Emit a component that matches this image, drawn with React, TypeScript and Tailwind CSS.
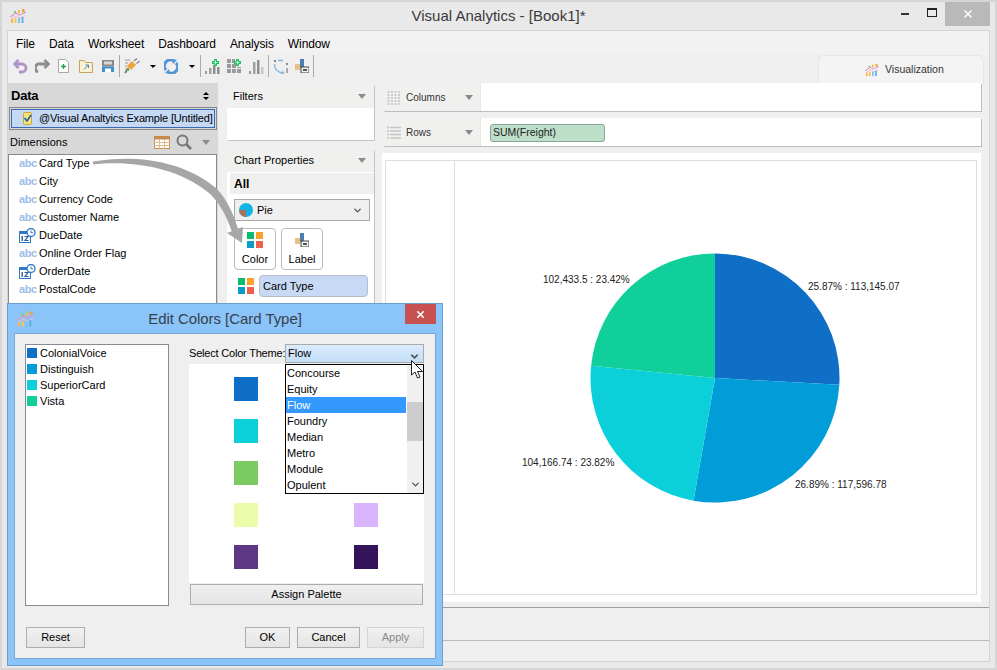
import { ChevronDown, X } from 'lucide-react';

const FONT = 'font-["Liberation_Sans",Arial,sans-serif]';

function Logo({ w = 16, h = 14 }: { w?: number; h?: number }) {
  return (
    <svg width={w} height={h} viewBox="0 0 16 14">
      <path d="M0 8 L6 4 L9 6 L16 3" fill="none" stroke="#d99ac4" strokeWidth="1.2" />
      <path d="M1 10 L6 7 L10 9 L15 7" fill="none" stroke="#e8b8d6" strokeWidth="1" />
      <rect x="1" y="10" width="2" height="4" fill="#f5b942" />
      <rect x="4.5" y="9" width="2" height="5" fill="#f5c35a" />
      <rect x="8" y="9" width="2" height="5" fill="#7cc4ee" />
      <rect x="11.5" y="8" width="2" height="6" fill="#5fb2e6" />
      <rect x="4" y="2" width="2" height="2" fill="#8cc46a" />
      <rect x="8" y="1" width="2" height="3" fill="#f5b942" />
      <rect x="12" y="0" width="2.5" height="3" fill="#f0a03c" />
    </svg>
  );
}

function Caret({ className = '' }: { className?: string }) {
  return <span className={`inline-block w-0 h-0 border-x-[4px] border-x-transparent border-t-[5px] border-t-[#8a8a8a] ${className}`} />;
}

function SmallCaret({ className = '' }: { className?: string }) {
  return <span className={`inline-block w-0 h-0 border-x-[3px] border-x-transparent border-t-[3px] border-t-black ${className}`} />;
}

function FourColors() {
  return (
    <div className="grid grid-cols-[7px_7px] gap-[2px]">
      <span className="w-[7px] h-[7px] bg-[#0cbc6e]" />
      <span className="w-[7px] h-[7px] bg-[#f8a22a]" />
      <span className="w-[7px] h-[7px] bg-[#0a9bc6]" />
      <span className="w-[7px] h-[7px] bg-[#ef5f4f]" />
    </div>
  );
}

function LabelGlyph() {
  return (
    <svg width="14" height="14" viewBox="0 0 14 14" className="shrink-0">
      <rect x="0" y="5" width="5" height="6" fill="#e5c184" />
      <rect x="5" y="0" width="4" height="9" fill="#4c7fb0" />
      <rect x="6" y="8" width="8" height="6" fill="#f2f2f2" stroke="#444" />
      <rect x="8" y="10" width="4" height="2" fill="#555" />
    </svg>
  );
}

function Abc() {
  return <span className="w-[20px] shrink-0 text-[11px] font-bold text-[#9bbdea] tracking-[-0.4px] leading-none">abc</span>;
}

function DateGlyph() {
  return (
    <svg width="17" height="15" viewBox="0 0 17 15">
      <rect x="0.5" y="3.5" width="11" height="11" fill="#fff" stroke="#2f79c9" />
      <rect x="0" y="3" width="12" height="3" fill="#2f79c9" />
      <rect x="2.5" y="8" width="1.4" height="5" fill="#2f5f9a" />
      <path d="M5.5 8.5 H9 L6 12.5 H9.5" fill="none" stroke="#2f5f9a" strokeWidth="1.2" />
      <circle cx="12" cy="4.5" r="4" fill="#fff" stroke="#2f79c9" strokeWidth="1.4" />
      <path d="M12 2.5 V4.8 H14" fill="none" stroke="#2f79c9" />
    </svg>
  );
}

function GreenPlus() {
  return (
    <>
      <path d="M10.5 0 V7 M7 3.5 H14" stroke="#17c45f" strokeWidth="3" />
      <path d="M10.5 1.5 V5.5 M8.5 3.5 H12.5" stroke="#c4f6d6" strokeWidth="1" />
    </>
  );
}

function Bars({ plus, dim, className = '' }: { plus?: boolean; dim?: boolean; className?: string }) {
  return (
    <svg width="15" height="15" viewBox="0 0 15 15" className={className}>
      <rect x="0" y="12" width="2" height="3" fill="#9a9a9a" />
      <rect x="4" y={dim ? 3 : 9} width="2.5" height={dim ? 12 : 6} fill="#a0a0a0" />
      <rect x="8" y={dim ? 1 : 6} width="2.5" height={dim ? 14 : 9} fill="#8f8f8f" />
      <rect x="12" y={8} width="2.5" height={7} fill={dim ? '#c8c8c8' : '#8f8f8f'} />
      {plus && <GreenPlus />}
    </svg>
  );
}

function GridPlus({ className = '' }: { className?: string }) {
  return (
    <svg width="14" height="14" viewBox="0 0 14 14" className={className}>
      <g fill="#9a9a9a">
        <rect x="0" y="0" width="4" height="4" /><rect x="5" y="0" width="3" height="4" />
        <rect x="0" y="5" width="4" height="4" /><rect x="5" y="5" width="4" height="4" /><rect x="10" y="8" width="4" height="1" />
        <rect x="0" y="10" width="4" height="4" /><rect x="5" y="10" width="4" height="4" /><rect x="10" y="10" width="4" height="4" />
      </g>
      <GreenPlus />
    </svg>
  );
}

function Sep({ className = '' }: { className?: string }) {
  return <span className={`w-px h-[22px] bg-[#a9a9a9] ${className}`} />;
}

function Pie() {
  const cx = 125;
  const cy = 125;
  const r = 124.5;
  const slices = [
    { v: 25.87, c: '#0f6fc6' },
    { v: 26.89, c: '#009dd9' },
    { v: 23.82, c: '#0bd0d9' },
    { v: 23.42, c: '#10cf9b' },
  ];
  let acc = 0;
  return (
    <svg width="250" height="250" viewBox="0 0 250 250">
      {slices.map(s => {
        const a0 = (acc / 100) * 2 * Math.PI;
        acc += s.v;
        const a1 = (acc / 100) * 2 * Math.PI;
        const d = `M${cx} ${cy} L${cx + r * Math.sin(a0)} ${cy - r * Math.cos(a0)} A${r} ${r} 0 0 1 ${cx + r * Math.sin(a1)} ${cy - r * Math.cos(a1)} Z`;
        return <path key={s.c} d={d} fill={s.c} />;
      })}
    </svg>
  );
}

function Btn({ children, className = '' }: { children: React.ReactNode; className?: string }) {
  return (
    <div className={`h-[21px] flex items-center justify-center border border-[#adadad] bg-gradient-to-b from-[#f0f0f0] to-[#e5e5e5] text-[11px] ${className}`}>
      {children}
    </div>
  );
}

const DIMENSIONS = [
  { name: 'Card Type', date: false },
  { name: 'City', date: false },
  { name: 'Currency Code', date: false },
  { name: 'Customer Name', date: false },
  { name: 'DueDate', date: true },
  { name: 'Online Order Flag', date: false },
  { name: 'OrderDate', date: true },
  { name: 'PostalCode', date: false },
  { name: 'ShipDate', date: false },
];

const THEMES = ['Concourse', 'Equity', 'Flow', 'Foundry', 'Median', 'Metro', 'Module', 'Opulent'];

const SWATCHES = ['#0f6fc6', '', '#0bd0d9', '', '#7cca62', '', '#ebfdaa', '#d9b5fe', '#5f3885', '#35135a'];

export default function App() {
  return (
    <div className={`${FONT} relative w-[997px] h-[670px] overflow-hidden bg-[#d6d6d6] p-[2px] text-[11px] text-black`}>
      <div className="h-full bg-[#e9e9e9] flex flex-col">
        {/* title bar */}
        <div className="h-[28px] shrink-0 flex items-center">
          <div className="ml-[8px] flex"><Logo /></div>
          <div className="flex-1 text-center text-[15px] text-[#3a3a3a] pl-[70px]">Visual Analytics - [Book1]*</div>
          <div className="flex items-start self-start mr-[5px]">
            <span className="mt-[11px] w-[8px] h-[2px] bg-[#333]" />
            <span className="mt-[6px] ml-[18px] w-[10px] h-[9px] border border-t-2 border-[#222]" />
            <div className="ml-[8px] w-[45px] h-[24px] bg-[#b9b9b9] flex items-center justify-center"><X size={12} strokeWidth={3} className="text-white" /></div>
          </div>
        </div>

        <div className="mx-[5px] h-[632px] border border-[#d4d4d4] flex flex-col bg-[#efefef]">
          {/* menu */}
          <div className="bg-[#f2f2f2] h-[23px] shrink-0 flex items-center gap-[14px] pl-[8px] pt-[3px] text-[12px] tracking-[-0.1px]">
            {['File', 'Data', 'Worksheet', 'Dashboard', 'Analysis', 'Window'].map(m => (
              <span key={m}>{m}</span>
            ))}
          </div>

          {/* toolbar */}
          <div className="h-[29px] shrink-0 flex items-start">
            <div className="flex items-center h-[22px] mt-px">
              <svg width="15" height="15" viewBox="0 0 15 15" className="ml-[5px]">
                <path d="M5.5 1 L1.5 5 L5.5 9" fill="none" stroke="#b093c8" strokeWidth="2.6" />
                <path d="M2 5 H9 A4 4 0 0 1 9 13 H6" fill="none" stroke="#b093c8" strokeWidth="2.8" />
              </svg>
              <svg width="15" height="14" viewBox="0 0 15 14" className="ml-[7px]">
                <path d="M9.5 1 L13.5 5 L9.5 9" fill="none" stroke="#8c8c8c" strokeWidth="2.6" />
                <path d="M13 5 H6 A4 4 0 0 0 3 13" fill="none" stroke="#8c8c8c" strokeWidth="3" />
              </svg>
              <svg width="11" height="14" viewBox="0 0 11 14" className="ml-[8px]">
                <path d="M0.5 0.5 H7.5 L10.5 3.5 V13.5 H0.5 Z" fill="#fff" stroke="#a8a8a8" />
                <path d="M5.5 5 V10 M3 7.5 H8" stroke="#1f9e4d" strokeWidth="1.3" />
              </svg>
              <svg width="14" height="13" viewBox="0 0 14 13" className="ml-[10px]">
                <path d="M0.5 0.5 H5 L6.5 2.5 H13.5 V12.5 H0.5 Z" fill="#fdf0d0" stroke="#c6a263" />
                <path d="M5 9.5 L9.5 5 M6.5 5 H9.5 V8" fill="none" stroke="#3d8fc9" />
              </svg>
              <svg width="12" height="12" viewBox="0 0 12 12" className="ml-[9px]">
                <rect x="0" y="0" width="12" height="6.5" fill="#8a8a8a" />
                <rect x="0" y="6.5" width="12" height="5.5" fill="#3f8fcc" />
                <rect x="2" y="1.5" width="8" height="3" fill="#d8d8d8" />
                <rect x="3" y="8.5" width="6" height="3.5" fill="#fff" />
              </svg>
              <Sep className="ml-[5px]" />
              <svg width="16" height="16" viewBox="0 0 16 16" className="ml-[4px]">
                <path d="M1 2 H6 M1 5 H4 M1 8 H3 M1 11 H3 M1 14 H3" stroke="#9a9a9a" strokeWidth="1.2" />
                <path d="M3 8 L8 3 L12 7 L7 12 Z" fill="#f0a33c" />
                <path d="M10 3 L13 0.5 M12.5 5.5 L15.5 3" stroke="#888" strokeWidth="1.4" />
                <path d="M4.5 10 L1 15" stroke="#777" strokeWidth="1.6" />
                <rect x="3" y="11" width="2" height="2" fill="#45b649" />
              </svg>
              <SmallCaret className="ml-[10px]" />
              <svg width="14" height="15" viewBox="0 0 14 15" className="ml-[8px]">
                <path d="M2 11 A6 6 0 0 1 9 1.5" fill="none" stroke="#4f94d4" strokeWidth="3" />
                <path d="M12 4 A6 6 0 0 1 5 13.5" fill="none" stroke="#4f94d4" strokeWidth="3" />
                <path d="M8 0 L13 1 L9 5 Z M6 15 L1 14 L5 10 Z" fill="#4f94d4" />
              </svg>
              <SmallCaret className="ml-[11px]" />
              <Sep className="ml-[5px]" />
              <Bars plus className="ml-[4px]" />
              <GridPlus className="ml-[7px]" />
              <Bars dim className="ml-[8px]" />
              <Sep className="ml-[4px]" />
              <svg width="15" height="15" viewBox="0 0 15 15" className="ml-[4px]">
                <rect x="1" y="1" width="2" height="2" fill="#888" />
                <rect x="13" y="4" width="2" height="2" fill="#888" />
                <rect x="13" y="9" width="2" height="5" fill="#aaa" />
                <path d="M5 1.5 H10 M1.5 5 C1.5 10 5 13.5 10 14" fill="none" stroke="#7db6e0" strokeWidth="1.3" />
                <path d="M9 11.5 L11 14 L8 15" fill="none" stroke="#7db6e0" />
              </svg>
              <span className="ml-[7px] flex"><LabelGlyph /></span>
              <Sep className="ml-[4px]" />
            </div>
            <div className="ml-auto mr-[5px] self-end w-[166px] h-[28px] bg-[#f4f4f4] border-t border-x border-[#e6e6e6] rounded-t-[6px] flex items-center pl-[46px] gap-[6px] text-[10.5px] text-[#333]">
              <Logo w={14} h={14} />
              <span>Visualization</span>
            </div>
          </div>

          {/* main area */}
          <div className="h-[524px] shrink-0 flex items-start">
            {/* data panel */}
            <div className="w-[210px] shrink-0 bg-[#d8d8d8] h-[240px] flex flex-col">
              <div className="h-[24px] shrink-0 flex items-center justify-between pl-[3px] pr-[9px] pt-px font-bold text-[13px] tracking-[-0.2px]">
                <span>Data</span>
                <span className="flex flex-col gap-[2px]">
                  <span className="w-0 h-0 border-x-[3px] border-x-transparent border-b-[3px] border-b-black" />
                  <span className="w-0 h-0 border-x-[3px] border-x-transparent border-t-[3px] border-t-black" />
                </span>
              </div>
              <div className="mx-px h-[23px] shrink-0 border border-[#888] p-px">
                <div className="h-full border border-[#3c68b5] bg-[#c5d9f5] flex items-center pl-[11px] whitespace-nowrap tracking-[-0.17px]">
                  <svg width="9" height="13" viewBox="0 0 9 13">
                    <rect x="0.5" y="0.5" width="8" height="12" rx="1" fill="#f5e27a" stroke="#c8a63a" />
                    <path d="M1.5 6 L4 9 L8 3" fill="none" stroke="#1c5fb5" strokeWidth="1.6" />
                  </svg>
                  <span className="ml-[7px]">@Visual Analtyics Example [Untitled]</span>
                </div>
              </div>
              <div className="h-[24px] shrink-0 flex items-center pl-[2px] pr-[8px]">
                <span>Dimensions</span>
                <svg width="16" height="13" viewBox="0 0 16 13" className="ml-auto">
                  <rect x="0.5" y="0.5" width="15" height="12" fill="#fff" stroke="#c58a4f" />
                  <rect x="0.5" y="0.5" width="15" height="3" fill="#c58a4f" />
                  <path d="M0 6.5 H16 M0 9.5 H16 M5.5 3 V13 M10.5 3 V13" stroke="#e0b88c" />
                </svg>
                <svg width="16" height="16" viewBox="0 0 16 16" className="ml-[6px]">
                  <circle cx="6.5" cy="6.5" r="5" fill="none" stroke="#777" strokeWidth="2" />
                  <path d="M10.5 10.5 L15 15" stroke="#777" strokeWidth="2.6" />
                </svg>
                <Caret className="ml-[10px]" />
              </div>
              <div className="flex-1 mr-px bg-white border border-[#8a8a8a] overflow-hidden">
                <div className="-mt-px">
                  {DIMENSIONS.map(d => (
                    <div key={d.name} className="h-[18px] flex items-center pl-[10px]">
                      {d.date ? <span className="w-[20px] flex"><DateGlyph /></span> : <Abc />}
                      <span>{d.name}</span>
                    </div>
                  ))}
                </div>
              </div>
            </div>

            {/* filters + chart properties */}
            <div className="w-[147px] shrink-0 ml-[9px]">
              <div className="bg-white shadow-[1px_1px_0_#c4c4c4] rounded-t-[4px] h-[57px]">
                <div className="h-[25px] bg-[#f0f0ee] rounded-t-[4px] flex items-center justify-between pl-[6px] pr-[8px] pt-[2px]">
                  <span>Filters</span>
                  <Caret />
                </div>
              </div>
              <div className="mt-[8px] bg-white shadow-[1px_1px_0_#c4c4c4] rounded-t-[4px] h-[180px]">
                <div className="h-[24px] bg-[#f0f0ee] rounded-t-[4px] flex items-center justify-between pl-[7px] pr-[8px] pt-px">
                  <span>Chart Properties</span>
                  <Caret />
                </div>
                <div className="h-[21px] mt-px ml-[3px] bg-[#efefef] flex items-center pl-[4px] font-bold text-[12px]">All</div>
                <div className="ml-[7px] w-[136px] mt-[5px] h-[22px] bg-[#efefef] border border-[#a8a8a8] flex items-center pl-[4px] pr-[6px]">
                  <svg width="14" height="14" viewBox="0 0 14 14">
                    <circle cx="7" cy="7" r="7" fill="#12b5e5" />
                    <path d="M7 7 V14 A7 7 0 0 1 0 7 Z" fill="#a5705f" />
                  </svg>
                  <span className="ml-[4px]">Pie</span>
                  <ChevronDown size={11} strokeWidth={3} className="ml-auto text-[#555]" />
                </div>
                <div className="flex gap-[5px] ml-[7px] mt-[7px]">
                  <div className="w-[42px] h-[42px] bg-white border border-[#bbb] rounded-[4px] flex flex-col items-center justify-between pt-[3px] pb-[2px]">
                    <FourColors />
                    <span>Color</span>
                  </div>
                  <div className="w-[42px] h-[42px] bg-white border border-[#bbb] rounded-[4px] flex flex-col items-center justify-between pt-[4px] pb-[2px]">
                    <LabelGlyph />
                    <span>Label</span>
                  </div>
                </div>
                <div className="flex items-center ml-[11px] mt-[5px] gap-[5px]">
                  <FourColors />
                  <div className="w-[109px] h-[22px] bg-[#c7d9f4] border border-[#b5bccb] rounded-[4px] flex items-center pl-[3px]">Card Type</div>
                </div>
              </div>
            </div>

            {/* shelves + canvas */}
            <div className="w-[599px] ml-[8px] shrink-0 flex flex-col">
              <div className="h-[28px] bg-white shadow-[1px_1px_0_#bdbdbd] flex rounded-l-[3px]">
                <div className="w-[99px] bg-[#f0f0ee] border-r border-[#e8e8dc] flex items-center pr-[7px] pt-px text-[10px] text-[#333]">
                  <svg width="14" height="14" viewBox="0 0 14 14" className="ml-[5px]">
                    <path d="M1.5 0 V14 M5 0 V14 M8.5 0 V14 M12 0 V14" stroke="#c4c4c4" strokeWidth="1.6" strokeDasharray="2 1" />
                  </svg>
                  <span className="ml-[5px]">Columns</span>
                  <Caret className="ml-auto" />
                </div>
              </div>
              <div className="mt-[7px] h-[28px] bg-white shadow-[1px_1px_0_#bdbdbd] flex rounded-l-[3px]">
                <div className="w-[99px] bg-[#f0f0ee] border-r border-[#e8e8dc] flex items-center pr-[7px] pt-px text-[10px] text-[#333]">
                  <svg width="14" height="14" viewBox="0 0 14 14" className="ml-[5px]">
                    <path d="M0 1.5 H14 M0 5 H14 M0 8.5 H14 M0 12 H14" stroke="#c4c4c4" strokeWidth="1.6" strokeDasharray="2 1 11 0" />
                  </svg>
                  <span className="ml-[5px]">Rows</span>
                  <Caret className="ml-auto" />
                </div>
                <div className="ml-[9px] mt-[6px] w-[115px] h-[18px] bg-[#bddfca] border border-[#86a895] rounded-[3px] flex items-center pl-[2px] text-[10.5px] text-[#222]">SUM(Freight)</div>
              </div>
              <div className="mt-[7px] h-[449px] bg-white pt-[7px] pl-[3px] pr-[4px] pb-[7px]">
                <div className="h-full border border-[#dedede] flex">
                  <div className="w-[69px] border-r border-[#dedede] shrink-0" />
                  <div className="flex-1 relative text-[10px] leading-[12px] text-[#222]">
                    <div className="absolute left-[135px] top-[92px] flex"><Pie /></div>
                    <span className="absolute left-[88px] top-[113px]">102,433.5 : 23.42%</span>
                    <span className="absolute left-[353px] top-[120px]">25.87% : 113,145.07</span>
                    <span className="absolute left-[67px] top-[296px]">104,166.74 : 23.82%</span>
                    <span className="absolute left-[340px] top-[318px]">26.89% : 117,596.78</span>
                  </div>
                </div>
              </div>
            </div>
          </div>

          {/* status rows */}
          <div className="h-[33px] shrink-0 border-t border-[#a0a0a0]" />
          <div className="flex-1 border-t border-[#bbbbbb]" />
        </div>
      </div>

      {/* drag arrow */}
      <svg className="absolute left-0 top-0 pointer-events-none" width="997" height="670">
        <path d="M93 161.5 C 130 155, 180 158, 216 188 C 226 198, 233 212, 238 229 L 232 232 C 226 214, 218 201, 209 193 C 178 167, 130 160, 93 164.5 Z" fill="#a6a6a6" />
        <path d="M227 233 L243 227 L242 243 Z" fill="#a6a6a6" />
      </svg>

      {/* Edit Colors dialog */}
      <div className="absolute left-[7px] top-[303px] w-[436px] h-[363px] bg-[#8ac4f8] border border-[#6e9ecb] flex flex-col">
        <div className="h-[29px] flex items-center relative shrink-0">
          <div className="ml-[9px] flex"><Logo w={17} h={16} /></div>
          <div className="flex-1 text-center text-[15px] text-[#37414b] pr-[26px] pt-[2px] tracking-[-0.05px]">Edit Colors [Card Type]</div>
          <div className="absolute right-[6px] top-0 w-[31px] h-[20px] bg-[#c75050] flex items-center justify-center"><X size={11} strokeWidth={3.5} className="text-white" /></div>
        </div>
        <div className="h-[326px] mx-[6px] bg-[#efefef] border border-[#7aa6cf] relative pl-[10px] pt-[10px]">
          <div className="flex">
            <div className="w-[144px] h-[262px] bg-white border border-[#8a8a94] pl-px shrink-0">
              {[['ColonialVoice', '#0f6fc6'], ['Distinguish', '#009dd9'], ['SuperiorCard', '#0bd0d9'], ['Vista', '#10cf9b']].map(([n, c]) => (
                <div key={n} className="h-[16px] flex items-center gap-[3px]">
                  <span className="w-[10px] h-[10px]" style={{ backgroundColor: c }} />
                  <span>{n}</span>
                </div>
              ))}
            </div>
            <div className="ml-[20px] w-[235px] flex flex-col">
              <div className="h-[19px] flex items-center">
                <span className="w-[96px] whitespace-nowrap tracking-[-0.2px]">Select Color Theme:</span>
                <div className="relative w-[139px] h-[19px] bg-gradient-to-b from-[#dcecfc] to-[#c3def8] border border-[#a9a9a9] flex items-center pl-[2px]">
                  Flow
                  <ChevronDown size={11} strokeWidth={3.5} className="absolute right-[3px] top-[6px] text-[#555]" />
                </div>
              </div>
              <div className="mt-px bg-white h-[219px] grid grid-cols-[24px_24px] gap-x-[96px] auto-rows-[24px] gap-y-[18px] pl-[45px] pt-[13px]">
                {SWATCHES.map((c, i) => (
                  <span key={i} className="w-[24px] h-[24px]" style={{ backgroundColor: c || 'transparent' }} />
                ))}
              </div>
              <Btn className="mt-px mx-px">Assign Palette</Btn>
            </div>
          </div>
          <div className="flex mt-[21px] ml-px">
            <Btn className="w-[59px]">Reset</Btn>
            <Btn className="w-[45px] ml-[160px]">OK</Btn>
            <Btn className="w-[63px] ml-[7px]">Cancel</Btn>
            <Btn className="w-[57px] ml-[7px] !text-[#8a8a8a] !border-[#d4d4d4]">Apply</Btn>
          </div>

          {/* theme dropdown */}
          <div className="absolute left-[270px] top-[30px] w-[139px] h-[130px] bg-white border border-black flex">
            <div className="w-[120px] shrink-0">
              {THEMES.map(t => (
                <div key={t} className={`h-[16px] flex items-center pl-px ${t === 'Flow' ? 'bg-[#3399ff] text-white' : ''}`}>{t}</div>
              ))}
            </div>
            <div className="flex-1 ml-px bg-[#f0f0f0] relative">
              <div className="absolute top-[37px] left-0 right-0 h-[39px] bg-[#cdcdcd]" />
              <ChevronDown size={11} strokeWidth={3} className="absolute bottom-[3px] left-[3px] text-[#555]" />
            </div>
          </div>
        </div>
      </div>

      {/* mouse pointer */}
      <svg className="absolute left-[411px] top-[360px]" width="14" height="20" viewBox="0 0 14 20">
        <path d="M0.5 0.5 V15 L4 12 L6.5 18 L9 17 L6.5 11.5 H11.5 Z" fill="#fff" stroke="#222" strokeWidth="1" />
      </svg>
    </div>
  );
}
